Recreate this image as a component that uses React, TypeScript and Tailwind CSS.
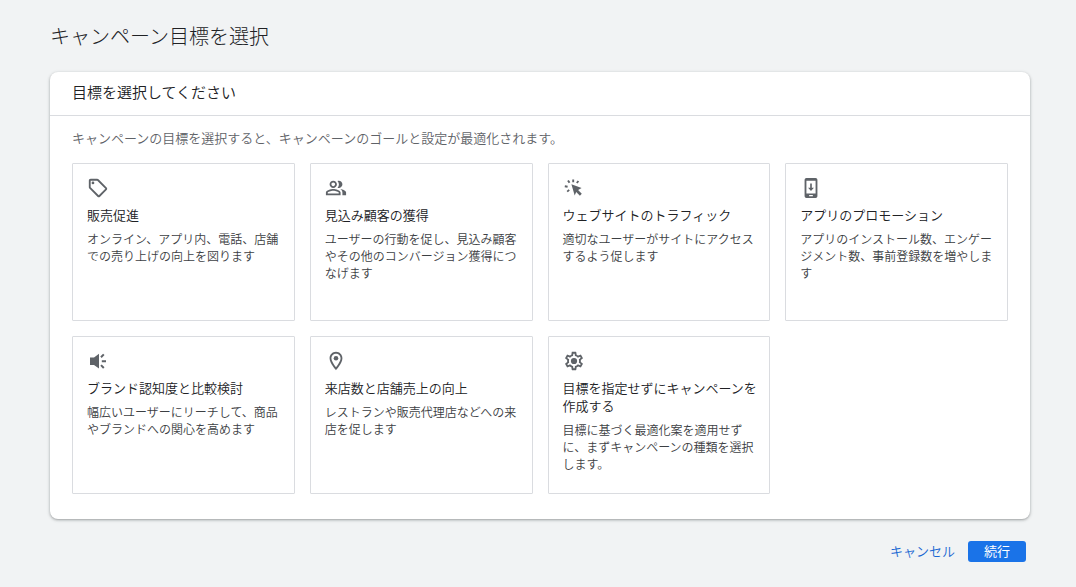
import type { ReactNode } from "react";
import { MdOutlineSell, MdOutlinePeopleAlt, MdOutlineLocationOn } from "react-icons/md";

const ClickIcon = () => (
  <svg viewBox="0 0 22 22" className="size-[22px]" fill="currentColor">
    <path d="M8.4 7.2 18.6 11l-3.5 2.1 3.7 3.7-1.9 1.9-3.7-3.7-1.5 3.5z" />
    <path
      d="M10.2 2.4v2.8M5 3.4l1.5 2.3M15.4 4l-1.6 2M1.8 9.2l2.8.5M4.2 14.6l2-1.7"
      stroke="currentColor"
      strokeWidth="1.9"
    />
  </svg>
);

const PhoneIcon = () => (
  <svg viewBox="0 0 24 24" className="size-[22px]" fill="currentColor" fillRule="evenodd">
    <path d="M7 1h10a2 2 0 0 1 2 2v18a2 2 0 0 1-2 2H7a2 2 0 0 1-2-2V3a2 2 0 0 1 2-2zm0 3v14h10V4zm3 15.7v1.3h4v-1.3z" />
    <path d="M11.1 7h1.8v4.8h2.3L12 15.2l-3.2-3.4h2.3z" />
  </svg>
);

const SpeakerIcon = () => (
  <svg viewBox="0 0 22 22" className="size-[22px]" fill="currentColor">
    <path d="M3 7.4h4L12 3.8v14.8L7 15H3z" />
    <path d="m14 7.3 2.8-2.9M14.8 11.2h4.2M14 15.1l2.8 2.9" stroke="currentColor" strokeWidth="2" />
  </svg>
);

const GearIcon = () => (
  <svg viewBox="0 0 24 24" className="size-[22px]" fill="currentColor">
    <path d="M19.43 12.98c.04-.32.07-.64.07-.98 0-.34-.03-.66-.07-.98l2.11-1.65c.19-.15.24-.42.12-.64l-2-3.46a.5.5 0 0 0-.61-.22l-2.49 1c-.52-.4-1.08-.73-1.69-.98l-.38-2.65A.488.488 0 0 0 14 2h-4c-.25 0-.46.18-.49.42l-.38 2.65c-.61.25-1.17.59-1.69.98l-2.49-1a.5.5 0 0 0-.61.22l-2 3.46c-.13.22-.07.49.12.64l2.11 1.65c-.04.32-.07.65-.07.98 0 .33.03.66.07.98l-2.11 1.65c-.19.15-.24.42-.12.64l2 3.46a.5.5 0 0 0 .61.22l2.49-1c.52.4 1.08.73 1.69.98l.38 2.65c.03.24.24.42.49.42h4c.25 0 .46-.18.49-.42l.38-2.65c.61-.25 1.17-.59 1.69-.98l2.49 1a.5.5 0 0 0 .61-.22l2-3.46a.5.5 0 0 0-.12-.64l-2.11-1.65zm-1.98-1.71c.04.31.05.52.05.73 0 .21-.02.43-.05.73l-.14 1.13.89.7 1.08.84-.7 1.21-1.27-.51-1.04-.42-.9.68c-.43.32-.84.56-1.25.73l-1.06.43-.16 1.13-.2 1.35h-1.4l-.35-2.48-1.06-.43c-.43-.18-.83-.41-1.23-.71l-.91-.7-1.06.43-1.27.51-.7-1.21 1.08-.84.89-.7-.14-1.13c-.03-.31-.05-.54-.05-.74s.02-.43.05-.73l.14-1.13-.89-.7-1.08-.84.7-1.21 1.27.51 1.04.42.9-.68c.43-.32.84-.56 1.25-.73l1.06-.43.16-1.13.2-1.35h1.39l.35 2.48 1.06.43c.43.18.83.41 1.23.71l.91.7 1.06-.43 1.27-.51.7 1.21-1.07.85-.89.7.14 1.13z" />
    <circle cx="12" cy="12" r="3.4" />
  </svg>
);

const goals: { icon: ReactNode; title: string; text: string }[] = [
  { icon: <MdOutlineSell size={22} />, title: "販売促進", text: "オンライン、アプリ内、電話、店舗での売り上げの向上を図ります" },
  { icon: <MdOutlinePeopleAlt size={22} />, title: "見込み顧客の獲得", text: "ユーザーの行動を促し、見込み顧客やその他のコンバージョン獲得につなげます" },
  { icon: <ClickIcon />, title: "ウェブサイトのトラフィック", text: "適切なユーザーがサイトにアクセスするよう促します" },
  { icon: <PhoneIcon />, title: "アプリのプロモーション", text: "アプリのインストール数、エンゲージメント数、事前登録数を増やします" },
  { icon: <SpeakerIcon />, title: "ブランド認知度と比較検討", text: "幅広いユーザーにリーチして、商品やブランドへの関心を高めます" },
  { icon: <MdOutlineLocationOn size={22} />, title: "来店数と店舗売上の向上", text: "レストランや販売代理店などへの来店を促します" },
  { icon: <GearIcon />, title: "目標を指定せずにキャンペーンを作成する", text: "目標に基づく最適化案を適用せずに、まずキャンペーンの種類を選択します。" },
];

export default function App() {
  return (
    <main lang="ja" className="min-h-screen bg-[#f1f3f4] pr-[46px] pl-[50px] font-['Noto_Sans_CJK_JP',sans-serif] font-[350] text-[#202124]">
      <h1 className="pt-[21px] pb-[21px] text-[20px] leading-[30px] font-light">キャンペーン目標を選択</h1>
      <section className="rounded-lg bg-white shadow-[0_1px_2px_rgba(60,64,67,0.3),0_1px_3px_1px_rgba(60,64,67,0.15)]">
        <h2 className="border-b border-[#dadce0] px-[22px] pt-2 pb-3 text-[15px] leading-[23px] font-[350]">目標を選択してください</h2>
        <div className="px-[22px] pt-3 pb-[25px]">
          <p className="text-[13px] leading-5 text-[#5f6368]">
            キャンペーンの目標を選択すると、キャンペーンのゴールと設定が最適化されます。
          </p>
          <div className="mt-[15px] grid auto-rows-fr grid-cols-4 gap-[15px]">
            {goals.map((g) => (
              <button
                key={g.title}
                type="button"
                className="flex min-h-[158px] flex-col items-start rounded-[1px] border border-[#dadce0] bg-white pt-[13px] pr-2 pl-[14px] text-left"
              >
                <span className="text-[#5f6368]">{g.icon}</span>
                <span className="mt-[7px] text-[13px] leading-[18px]">{g.title}</span>
                <span className="mt-[6px] text-[12px] leading-[17px] text-[#3c4043]">{g.text}</span>
              </button>
            ))}
          </div>
        </div>
      </section>
      <div className="flex items-center justify-end gap-[13px] py-[22px] pr-1 text-[13px] leading-[19px]">
        <button type="button" className="pb-[2px] text-[#1967d2]">キャンセル</button>
        <button type="button" className="rounded-[3px] bg-[#1a73e8] px-4 pb-[2px] font-normal text-white">続行</button>
      </div>
    </main>
  );
}
